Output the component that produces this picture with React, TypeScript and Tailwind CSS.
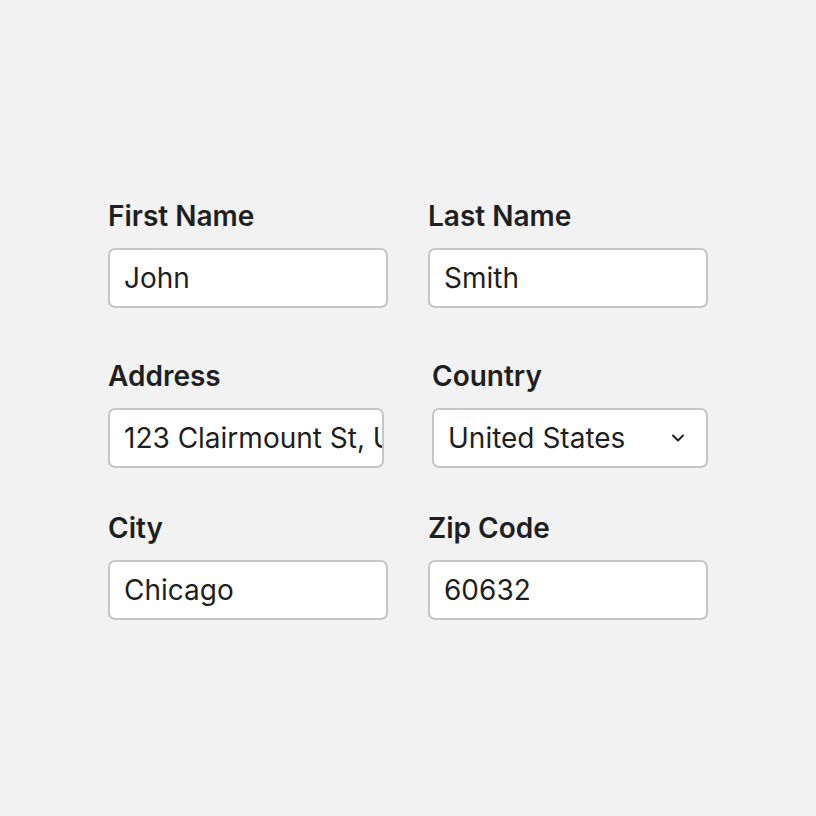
import { ChevronDown } from 'lucide-react';

interface FieldProps {
  label: string;
  value: string;
  width?: string;
}

function Field({ label, value, width = 'w-[280px]' }: FieldProps) {
  return (
    <div className={width}>
      <div className="text-[28px] leading-[32px] font-semibold text-[#1f1f1f]">{label}</div>
      <div className="mt-[16px] h-[60px] rounded-[7px] border-2 border-[#c6c6c6] bg-white px-[14px] flex items-center overflow-hidden">
        <span className="text-[28px] text-[#1f1f1f] whitespace-nowrap">{value}</span>
      </div>
    </div>
  );
}

export default function App() {
  return (
    <div
      className="w-[816px] h-[816px] bg-[#f2f2f2] pt-[200px] pl-[108px]"
      style={{ fontFamily: 'Inter, "Liberation Sans", sans-serif' }}
    >
      <div className="flex gap-[40px]">
        <Field label="First Name" value="John" />
        <Field label="Last Name" value="Smith" />
      </div>

      <div className="flex gap-[48px] mt-[52px]">
        <Field label="Address" value="123 Clairmount St, Unit 4" width="w-[276px]" />
        <div className="w-[276px]">
          <div className="text-[28px] leading-[32px] font-semibold text-[#1f1f1f]">Country</div>
          <div className="mt-[16px] h-[60px] rounded-[7px] border-2 border-[#c6c6c6] bg-white pl-[14px] pr-[18px] flex items-center justify-between">
            <span className="text-[28px] text-[#1f1f1f]">United States</span>
            <ChevronDown size={20} strokeWidth={2.25} className="text-[#1f1f1f]" />
          </div>
        </div>
      </div>

      <div className="flex gap-[40px] mt-[44px]">
        <Field label="City" value="Chicago" />
        <Field label="Zip Code" value="60632" />
      </div>
    </div>
  );
}
